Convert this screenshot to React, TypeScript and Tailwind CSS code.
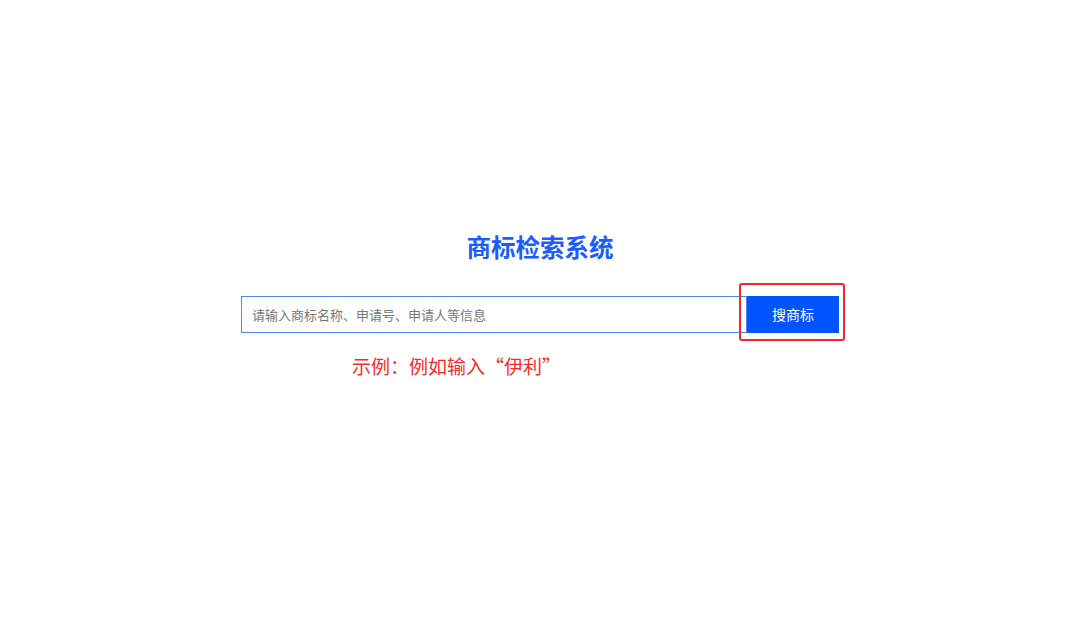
export default function App() {
  return (
    <div
      className="flex h-[620px] w-[1080px] flex-col items-center bg-white"
      style={{ fontFamily: '"Noto Sans CJK SC", "Noto Sans", sans-serif' }}
    >
      <h1 className="mt-[230px] text-[24.5px] font-bold leading-[34px] text-[#1a5cff]">商标检索系统</h1>

      <div className="mt-[32px] flex w-[598px] items-center">
        <div className="flex h-[37px] flex-1 items-center border border-[#4f87f2] pl-[10px]">
          <span className="text-[13px] text-[#777777]">请输入商标名称、申请号、申请人等信息</span>
        </div>
        <div className="relative">
          <button className="h-[37px] w-[92px] bg-[#0055ff] text-[14px] text-white">搜商标</button>
          {/* annotation box */}
          <div className="pointer-events-none absolute -left-[8px] -top-[13px] h-[58px] w-[106px] rounded-[3px] border-2 border-[#f2262a]" />
        </div>
      </div>

      <div className="mt-[20px] w-[598px] pl-[111px]">
        <span className="text-[19px] leading-[26px] text-[#f52a2a]">示例：例如输入“伊利”</span>
      </div>
    </div>
  );
}
